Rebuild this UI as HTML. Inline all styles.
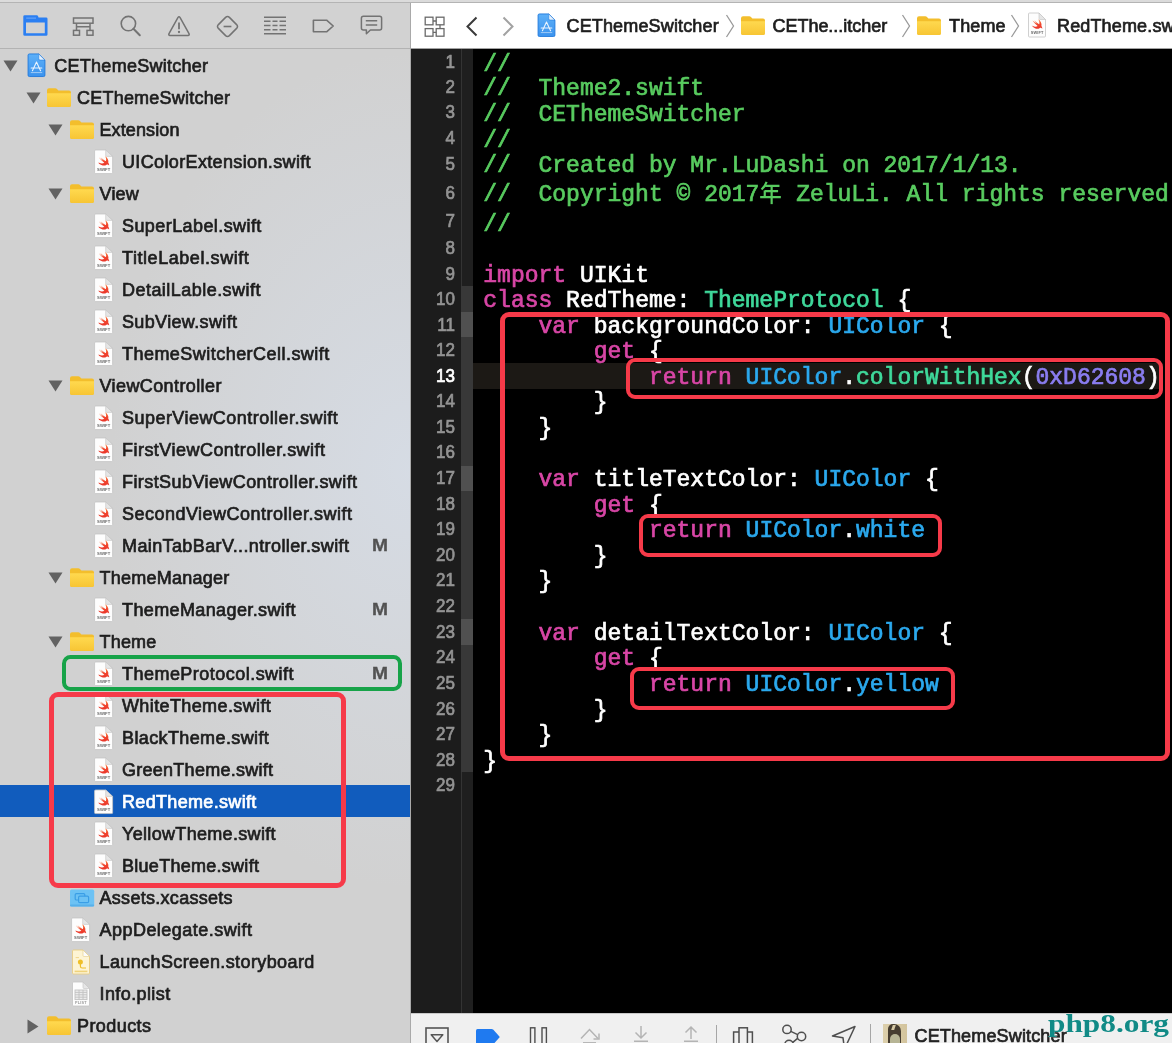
<!DOCTYPE html>
<html><head><meta charset="utf-8"><title>Xcode</title>
<style>
html,body{margin:0;padding:0}
body{width:1172px;height:1043px;overflow:hidden;position:relative;background:#d2d2d2;font-family:"Liberation Sans",sans-serif;color:#262626}
.abs{position:absolute}
/* top strip */
#topstrip{position:absolute;left:0;top:0;width:1172px;height:3px;background:#dbdbdb;border-bottom:1px solid #b4b4b4;box-sizing:border-box;z-index:9}
/* sidebar */
#side{will-change:transform;position:absolute;left:0;top:0;width:410px;height:1043px;background:radial-gradient(ellipse 300px 420px at 410px 470px,rgba(214,220,229,.95),rgba(214,220,229,0)),#d1d1d1;overflow:hidden}
#navbar{position:absolute;left:0;top:3px;width:410px;height:45px;border-bottom:1px solid #b3b3b3;background:#d2d2d2}
#navbar svg{position:absolute}
.row{position:absolute;left:0;width:410px;height:32px}
.row.sel{background:#115cbd}
.row.sel .lb{color:#fff;-webkit-text-stroke:.7px #fff}
.row svg{position:absolute}
.lb{position:absolute;top:.5px;height:32px;line-height:32px;font-size:18px;letter-spacing:.15px;white-space:nowrap;color:#1e1e1e;-webkit-text-stroke:.7px #1e1e1e}
.bm{position:absolute;left:372px;top:.6px;line-height:32px;font-size:17px;font-weight:bold;color:#525252;-webkit-text-stroke:.3px #525252;transform:scaleX(1.13);transform-origin:0 50%}
#sidesep{position:absolute;left:410px;top:3px;width:1px;height:1040px;background:#a9a9a9}
/* editor */
#jump{will-change:transform;position:absolute;left:411px;top:3px;width:761px;height:45px;background:#fff;border-bottom:1px solid #a3a3a3;overflow:hidden}
#jump svg{position:absolute}
#jump .jt{position:absolute;top:.5px;line-height:44px;font-size:18px;letter-spacing:.15px;color:#1e1e1e;-webkit-text-stroke:.7px #1e1e1e;white-space:nowrap}
#ed{will-change:transform;position:absolute;left:411px;top:49px;width:761px;height:964px;background:#000;overflow:hidden}
#gut{position:absolute;left:0;top:0;width:50px;height:966px;background:#1c1c1c}
#rib{position:absolute;left:50px;top:0;width:12px;height:966px;background:#1f1f1f;border-left:1px solid #343434;box-sizing:border-box}
.rb{position:absolute;left:50px;width:12px}
#curline{position:absolute;left:62px;top:314px;width:687px;height:26px;background:#1c1915}
.ln{position:absolute;left:0;width:44px;text-align:right;height:26px;line-height:26px;font-size:18.5px;color:#949494;-webkit-text-stroke:.7px #949494;transform:scaleX(.92);transform-origin:100% 50%}
.ln.cur{color:#fff;-webkit-text-stroke:.7px #fff}
pre.cd{position:absolute;left:72.3px;margin:0;height:26px;line-height:26px;font-family:"Liberation Mono",monospace;font-size:23px;font-weight:normal;-webkit-text-stroke:.7px;letter-spacing:0;color:#fff;white-space:pre;transform:scaleY(1.045);transform-origin:0 50%;margin-top:.3px}
.c{color:#58cb5f}.k{color:#d846a6}.t{color:#2ba9ee}.g{color:#3fd99b}.n{color:#8a7df0}
.cjk{display:inline-block;width:23px;height:1px;position:relative}
.cjk svg{position:absolute;left:0;bottom:-3.2px}
.box{position:absolute;border:5px solid #f63a49;border-radius:9px;box-sizing:border-box}
/* debug bar */
#dbg{will-change:transform;position:absolute;left:411px;top:1013px;width:761px;height:30px;background:#f0f0f0;border-top:1px solid #c8c8c8;box-sizing:border-box;overflow:hidden}
#dbg svg{position:absolute}
</style></head>
<body>
<svg width="0" height="0" style="position:absolute">
<defs>
<linearGradient id="gf" x1="0" y1="0" x2="0" y2="1"><stop offset="0" stop-color="#ffd94f"/><stop offset="1" stop-color="#f7c534"/></linearGradient>
<linearGradient id="gs" x1="0" y1="0" x2="0" y2="1"><stop offset="0" stop-color="#f9803a"/><stop offset=".55" stop-color="#f0452f"/><stop offset="1" stop-color="#ea3529"/></linearGradient>
<linearGradient id="gp" x1="0" y1="0" x2="0" y2="1"><stop offset="0" stop-color="#5db0f8"/><stop offset="1" stop-color="#3b93ee"/></linearGradient>
<symbol id="i-folder" viewBox="0 0 26 21">
<path d="M1 3.2Q1 1.2 3 1.2H9.2Q10.4 1.2 11.2 2.2L12.4 3.6H23Q25 3.6 25 5.6V18Q25 20 23 20H3Q1 20 1 18Z" fill="#f3be2c"/>
<path d="M1 6.2H25V18Q25 20 23 20H3Q1 20 1 18Z" fill="url(#gf)"/>
</symbol>
<symbol id="i-assets" viewBox="0 0 26 21">
<rect x="1" y="2.6" width="24.2" height="16.8" rx="1.6" fill="#6dc2f4"/>
<rect x="1" y="17.6" width="24.2" height="1.8" rx=".9" fill="#57b0ea"/>
<rect x="6.2" y="6.6" width="9.6" height="6.4" rx="1.2" fill="none" stroke="#3a9ee6" stroke-width="1.2"/>
<rect x="9.6" y="9.2" width="10" height="6.4" rx="1.2" fill="#6dc2f4" stroke="#3a9ee6" stroke-width="1.2"/>
</symbol>
<symbol id="i-page" viewBox="0 0 20 26">
<path d="M1.5 2Q1.5 1 2.5 1H12L18.5 7.5V24Q18.5 25 17.5 25H2.5Q1.5 25 1.5 24Z" fill="#fdfdfd" stroke="#c4c4c4" stroke-width=".8"/>
<path d="M12 1V6.5Q12 7.5 13 7.5H18.5Z" fill="#e6e6e6" stroke="#c4c4c4" stroke-width=".6"/>
</symbol>
<symbol id="i-swift" viewBox="0 0 20 26" preserveAspectRatio="none">
<use href="#i-page"/>
<path transform="translate(3.17,5.19) scale(.59)" fill="url(#gs)" d="M13.543 3.41c4.114 2.47 6.545 7.162 5.549 11.131-.024.093-.05.181-.076.272l.002.001c2.062 2.538 1.5 5.258 1.236 4.745-1.072-2.086-3.066-1.568-4.088-1.043a6.803 6.803 0 0 1-.281.158l-.02.012-.002.002c-2.115 1.123-4.957 1.205-7.812-.022a12.568 12.568 0 0 1-5.64-4.838c.649.48 1.35.902 2.097 1.252 3.019 1.414 6.051 1.311 8.197-.002C9.651 12.73 7.101 9.67 5.146 7.191a10.628 10.628 0 0 1-1.005-1.384c2.34 2.142 6.038 4.83 7.365 5.576C8.69 8.408 6.208 4.743 6.324 4.86c4.436 4.47 8.528 6.996 8.528 6.996.154.085.27.154.36.213.085-.215.16-.437.224-.668.708-2.588-.09-5.548-1.893-7.992z"/>
<text x="10.1" y="22.1" text-anchor="middle" font-family="Liberation Sans,sans-serif" font-weight="bold" font-size="3.9" fill="#6c6c6c" letter-spacing=".1">SWIFT</text>
</symbol>
<symbol id="i-story" viewBox="0 0 20 26">
<path d="M1.5 2Q1.5 1 2.5 1H12L18.5 7.5V24Q18.5 25 17.5 25H2.5Q1.5 25 1.5 24Z" fill="#fdf4d4" stroke="#e6cc84" stroke-width=".9"/>
<path d="M12 1V6.5Q12 7.5 13 7.5H18.5Z" fill="#fbfbfb" stroke="#e6cc84" stroke-width=".6"/>
<circle cx="9.4" cy="13" r="2.5" fill="#efbf27"/>
<path d="M9.4 15V17.2Q9.4 19 11.2 19H15" fill="none" stroke="#efbf27" stroke-width="1.2"/>
<path d="M4.6 8.6H8" stroke="#f1d68a" stroke-width="1"/>
<rect x="3.6" y="21.6" width="12.8" height="1.6" fill="#efd27a"/>
</symbol>
<symbol id="i-plist" viewBox="0 0 20 26">
<use href="#i-page"/>
<g stroke="#c2c2c2" stroke-width=".9" fill="none">
<rect x="4" y="9" width="12" height="9.6" fill="#ececec"/>
<path d="M4 11.4H16M4 13.8H16M4 16.2H16M8 9V18.6M12 9V18.6"/>
</g>
<text x="10" y="23" text-anchor="middle" font-family="Liberation Sans,sans-serif" font-weight="bold" font-size="3.8" fill="#9a9a9a" letter-spacing=".2">PLIST</text>
</symbol>
<symbol id="i-proj" viewBox="0 0 21 27">
<path d="M1.2 2.5Q1.2 1 2.7 1H13L19.8 7.8V24.5Q19.8 26 18.3 26H2.7Q1.2 26 1.2 24.5Z" fill="url(#gp)" stroke="#2079dc" stroke-width="1"/>
<path d="M13 1V6.3Q13 7.8 14.5 7.8H19.8Z" fill="#e3f0fd" stroke="#2079dc" stroke-width=".6"/>
<g stroke="#eaf4fe" stroke-width="1.2" fill="none" stroke-linecap="round">
<path d="M10.5 10L6 19.5M10.5 10L15 19.5M4.6 16.6H16.4"/>
<path d="M4.6 21.6H16.4" stroke-width=".8" opacity=".75"/>
</g>
</symbol>
</defs>
</svg>

<div id="topstrip"></div>
<div id="side">
<div id="navbar">
<!-- project navigator (selected, blue) -->
<svg style="left:23px;top:12px" width="25" height="22" viewBox="0 0 25 22"><path fill-rule="evenodd" d="M.3 1.6Q.3 .2 1.7 .2H13.6Q14.9 .2 15.2 1.5L15.5 2.4H23.1Q24.5 2.4 24.5 3.8V19.4Q24.5 20.8 23.1 20.8H1.7Q.3 20.8 .3 19.4ZM3 7.6V18.2H21.8V7.6Z" fill="#2b7ff2"/><path d="M3.2 3.1H13" stroke="#79b0f7" stroke-width=".9"/></svg>
<!-- hierarchy -->
<svg style="left:72px;top:13.5px" width="23" height="21" viewBox="0 0 23 21"><g fill="none" stroke="#737373" stroke-width="1.5"><rect x="1.5" y="1" width="19.5" height="5.2"/><rect x="1.5" y="13.4" width="6" height="4.8"/><rect x="15" y="13.4" width="6" height="4.8"/><path d="M4.5 6.2V13.4M18 6.2V13.4M4.5 9.8H18"/></g></svg>
<!-- search -->
<svg style="left:119px;top:11.5px" width="23" height="22" viewBox="0 0 23 22"><g fill="none" stroke="#737373" stroke-width="1.6"><circle cx="9.4" cy="8.6" r="7.2"/><path d="M14.4 13.8L20.8 20.2" stroke-linecap="round" stroke-width="2"/></g></svg>
<!-- warning -->
<svg style="left:167px;top:11.5px" width="24" height="22" viewBox="0 0 24 22"><path d="M10.9 2.6Q12 1 13.1 2.6L22 18.6Q22.8 20.4 21 20.4H3Q1.2 20.4 2 18.6Z" fill="none" stroke="#737373" stroke-width="1.5" stroke-linejoin="round"/><path d="M12 7.6V14.2" stroke="#737373" stroke-width="1.8"/><circle cx="12" cy="17" r="1.15" fill="#737373"/></svg>
<!-- test diamond -->
<svg style="left:215.5px;top:11.5px" width="23" height="23" viewBox="0 0 23 23"><path d="M9.6 2.4Q11.5 .6 13.4 2.4L20.6 9.6Q22.4 11.5 20.6 13.4L13.4 20.6Q11.5 22.4 9.6 20.6L2.4 13.4Q.6 11.5 2.4 9.6Z" fill="none" stroke="#737373" stroke-width="1.5"/><path d="M7.6 11.5H15.4" stroke="#737373" stroke-width="1.6"/></svg>
<!-- debug lines -->
<svg style="left:263px;top:13px" width="24" height="20" viewBox="0 0 24 20"><g stroke="#737373" stroke-width="1.4"><path d="M1 1.2H23M1 17.8H23"/><path d="M1 5.3H7.5M9.5 5.3H14.5M16.5 5.3H23M1 9.5H7.5M9.5 9.5H14.5M16.5 9.5H23M1 13.7H7.5M9.5 13.7H14.5M16.5 13.7H23"/></g></svg>
<!-- breakpoint -->
<svg style="left:311.5px;top:15.5px" width="23" height="14" viewBox="0 0 23 14"><path d="M1.4 1.2H14.6L21.2 7L14.6 12.8H1.4Z" fill="none" stroke="#737373" stroke-width="1.6" stroke-linejoin="round"/></svg>
<!-- report -->
<svg style="left:359.5px;top:11.5px" width="23" height="21" viewBox="0 0 23 21"><path d="M3.4 1.2H19.6Q21.6 1.2 21.6 3.2V13Q21.6 15 19.6 15H10.4L6.4 18.8V15H3.4Q1.4 15 1.4 13V3.2Q1.4 1.2 3.4 1.2Z" fill="none" stroke="#737373" stroke-width="1.5" stroke-linejoin="round"/><path d="M5.8 5.8H17.2M5.8 10H17.2" stroke="#737373" stroke-width="1.5"/></svg>
</div>
<div class="row" style="top:49px"><svg class="tri" style="left:3.4px;top:11px" width="15" height="12" viewBox="0 0 15 12"><path d="M0.5 0.5H14.5L7.5 11.5Z" fill="#626262"/></svg><svg class="ic" style="left:27px;top:4px" width="19" height="24.5"><use href="#i-proj"/></svg><span class="lb" style="left:54.3px;letter-spacing:0.264px">CEThemeSwitcher</span></div>
<div class="row" style="top:81px"><svg class="tri" style="left:25.6px;top:11px" width="15" height="12" viewBox="0 0 15 12"><path d="M0.5 0.5H14.5L7.5 11.5Z" fill="#626262"/></svg><svg class="ic" style="left:46px;top:6px" width="26" height="21"><use href="#i-folder"/></svg><span class="lb" style="left:77px;letter-spacing:0.217px">CEThemeSwitcher</span></div>
<div class="row" style="top:113px"><svg class="tri" style="left:47.8px;top:11px" width="15" height="12" viewBox="0 0 15 12"><path d="M0.5 0.5H14.5L7.5 11.5Z" fill="#626262"/></svg><svg class="ic" style="left:68.5px;top:6px" width="26" height="21"><use href="#i-folder"/></svg><span class="lb" style="left:99.5px;letter-spacing:0.115px">Extension</span></div>
<div class="row" style="top:145px"><svg class="ic" style="left:92.6px;top:4px" width="21.2" height="25.6"><use href="#i-swift"/></svg><span class="lb" style="left:122px;letter-spacing:0.36px">UIColorExtension.swift</span></div>
<div class="row" style="top:177px"><svg class="tri" style="left:47.8px;top:11px" width="15" height="12" viewBox="0 0 15 12"><path d="M0.5 0.5H14.5L7.5 11.5Z" fill="#626262"/></svg><svg class="ic" style="left:68.5px;top:6px" width="26" height="21"><use href="#i-folder"/></svg><span class="lb" style="left:99.5px;letter-spacing:0.199px">View</span></div>
<div class="row" style="top:209px"><svg class="ic" style="left:92.6px;top:4px" width="21.2" height="25.6"><use href="#i-swift"/></svg><span class="lb" style="left:122px;letter-spacing:0.42px">SuperLabel.swift</span></div>
<div class="row" style="top:241px"><svg class="ic" style="left:92.6px;top:4px" width="21.2" height="25.6"><use href="#i-swift"/></svg><span class="lb" style="left:122px;letter-spacing:0.563px">TitleLabel.swift</span></div>
<div class="row" style="top:273px"><svg class="ic" style="left:92.6px;top:4px" width="21.2" height="25.6"><use href="#i-swift"/></svg><span class="lb" style="left:122px;letter-spacing:0.461px">DetailLable.swift</span></div>
<div class="row" style="top:305px"><svg class="ic" style="left:92.6px;top:4px" width="21.2" height="25.6"><use href="#i-swift"/></svg><span class="lb" style="left:122px;letter-spacing:0.359px">SubView.swift</span></div>
<div class="row" style="top:337px"><svg class="ic" style="left:92.6px;top:4px" width="21.2" height="25.6"><use href="#i-swift"/></svg><span class="lb" style="left:122px;letter-spacing:0.463px">ThemeSwitcherCell.swift</span></div>
<div class="row" style="top:369px"><svg class="tri" style="left:47.8px;top:11px" width="15" height="12" viewBox="0 0 15 12"><path d="M0.5 0.5H14.5L7.5 11.5Z" fill="#626262"/></svg><svg class="ic" style="left:68.5px;top:6px" width="26" height="21"><use href="#i-folder"/></svg><span class="lb" style="left:99.5px;letter-spacing:0.399px">ViewController</span></div>
<div class="row" style="top:401px"><svg class="ic" style="left:92.6px;top:4px" width="21.2" height="25.6"><use href="#i-swift"/></svg><span class="lb" style="left:122px;letter-spacing:0.461px">SuperViewController.swift</span></div>
<div class="row" style="top:433px"><svg class="ic" style="left:92.6px;top:4px" width="21.2" height="25.6"><use href="#i-swift"/></svg><span class="lb" style="left:122px;letter-spacing:0.471px">FirstViewController.swift</span></div>
<div class="row" style="top:465px"><svg class="ic" style="left:92.6px;top:4px" width="21.2" height="25.6"><use href="#i-swift"/></svg><span class="lb" style="left:122px;letter-spacing:0.42px">FirstSubViewController.swift</span></div>
<div class="row" style="top:497px"><svg class="ic" style="left:92.6px;top:4px" width="21.2" height="25.6"><use href="#i-swift"/></svg><span class="lb" style="left:122px;letter-spacing:0.485px">SecondViewController.swift</span></div>
<div class="row" style="top:529px"><svg class="ic" style="left:92.6px;top:4px" width="21.2" height="25.6"><use href="#i-swift"/></svg><span class="lb" style="left:122px;letter-spacing:0.388px">MainTabBarV...ntroller.swift</span><span class="bm">M</span></div>
<div class="row" style="top:561px"><svg class="tri" style="left:47.8px;top:11px" width="15" height="12" viewBox="0 0 15 12"><path d="M0.5 0.5H14.5L7.5 11.5Z" fill="#626262"/></svg><svg class="ic" style="left:68.5px;top:6px" width="26" height="21"><use href="#i-folder"/></svg><span class="lb" style="left:99.5px;letter-spacing:0.243px">ThemeManager</span></div>
<div class="row" style="top:593px"><svg class="ic" style="left:92.6px;top:4px" width="21.2" height="25.6"><use href="#i-swift"/></svg><span class="lb" style="left:122px;letter-spacing:0.385px">ThemeManager.swift</span><span class="bm">M</span></div>
<div class="row" style="top:625px"><svg class="tri" style="left:47.8px;top:11px" width="15" height="12" viewBox="0 0 15 12"><path d="M0.5 0.5H14.5L7.5 11.5Z" fill="#626262"/></svg><svg class="ic" style="left:68.5px;top:6px" width="26" height="21"><use href="#i-folder"/></svg><span class="lb" style="left:99.5px;letter-spacing:0.194px">Theme</span></div>
<div class="row" style="top:657px"><svg class="ic" style="left:92.6px;top:4px" width="21.2" height="25.6"><use href="#i-swift"/></svg><span class="lb" style="left:122px;letter-spacing:0.47px">ThemeProtocol.swift</span><span class="bm">M</span></div>
<div class="row" style="top:689px"><svg class="ic" style="left:92.6px;top:4px" width="21.2" height="25.6"><use href="#i-swift"/></svg><span class="lb" style="left:122px;letter-spacing:0.385px">WhiteTheme.swift</span></div>
<div class="row" style="top:721px"><svg class="ic" style="left:92.6px;top:4px" width="21.2" height="25.6"><use href="#i-swift"/></svg><span class="lb" style="left:122px;letter-spacing:0.385px">BlackTheme.swift</span></div>
<div class="row" style="top:753px"><svg class="ic" style="left:92.6px;top:4px" width="21.2" height="25.6"><use href="#i-swift"/></svg><span class="lb" style="left:122px;letter-spacing:0.265px">GreenTheme.swift</span></div>
<div class="row sel" style="top:785px"><svg class="ic" style="left:92.6px;top:4px" width="21.2" height="25.6"><use href="#i-swift"/></svg><span class="lb" style="left:122px;letter-spacing:0.332px">RedTheme.swift</span></div>
<div class="row" style="top:817px"><svg class="ic" style="left:92.6px;top:4px" width="21.2" height="25.6"><use href="#i-swift"/></svg><span class="lb" style="left:122px;letter-spacing:0.323px">YellowTheme.swift</span></div>
<div class="row" style="top:849px"><svg class="ic" style="left:92.6px;top:4px" width="21.2" height="25.6"><use href="#i-swift"/></svg><span class="lb" style="left:122px;letter-spacing:0.276px">BlueTheme.swift</span></div>
<div class="row" style="top:881px"><svg class="ic" style="left:68.5px;top:6px" width="26" height="21"><use href="#i-assets"/></svg><span class="lb" style="left:99.5px;letter-spacing:0.29px">Assets.xcassets</span></div>
<div class="row" style="top:913px"><svg class="ic" style="left:70.1px;top:4px" width="21.2" height="25.6"><use href="#i-swift"/></svg><span class="lb" style="left:99.5px;letter-spacing:0.465px">AppDelegate.swift</span></div>
<div class="row" style="top:945px"><svg class="ic" style="left:71.0px;top:4px" width="20" height="26"><use href="#i-story"/></svg><span class="lb" style="left:99.5px;letter-spacing:0.394px">LaunchScreen.storyboard</span></div>
<div class="row" style="top:977px"><svg class="ic" style="left:71.0px;top:4px" width="20" height="26"><use href="#i-plist"/></svg><span class="lb" style="left:99.5px;letter-spacing:0.405px">Info.plist</span></div>
<div class="row" style="top:1009px"><svg class="tri" style="left:27.1px;top:9.5px" width="12" height="15" viewBox="0 0 12 15"><path d="M0.5 0.5V14.5L11.5 7.5Z" fill="#626262"/></svg><svg class="ic" style="left:46px;top:6px" width="26" height="21"><use href="#i-folder"/></svg><span class="lb" style="left:77px;letter-spacing:0.432px">Products</span></div>
<!-- annotation boxes in sidebar -->
<div class="box" style="left:62px;top:655px;width:339.6px;height:35.7px;border-color:#17a349;border-width:4.8px;border-radius:8.5px"></div>
<div class="box" style="left:49.4px;top:692px;width:296.8px;height:195.6px;border-radius:9px;border-width:5.2px"></div>
</div>
<div id="sidesep"></div>

<div id="jump">
<!-- related items grid -->
<svg style="left:12.5px;top:13px" width="22" height="22" viewBox="0 0 22 22"><g fill="none" stroke="#6a6a6a" stroke-width="1.3"><rect x="1.2" y="1.2" width="7.8" height="7.6"/><rect x="12.2" y="1.2" width="7.8" height="7.6"/><rect x="1.2" y="12.6" width="7.8" height="7.6"/><rect x="12.2" y="12.6" width="7.8" height="7.6"/><path d="M9 5H12.2M16 8.8V12.6M12.2 16.4H9"/></g></svg>
<svg style="left:54px;top:13px" width="14" height="21" viewBox="0 0 14 21"><path d="M11.5 1.5L2.5 10.5L11.5 19.5" fill="none" stroke="#3a3a3a" stroke-width="2"/></svg>
<svg style="left:90px;top:13px" width="14" height="21" viewBox="0 0 14 21"><path d="M2.5 1.5L11.5 10.5L2.5 19.5" fill="none" stroke="#a2a2a2" stroke-width="2"/></svg>
<svg style="left:126.3px;top:9.5px" width="19" height="24.5"><use href="#i-proj"/></svg>
<span class="jt" style="left:155.5px">CEThemeSwitcher</span>
<svg style="left:314px;top:11px" width="10" height="24" viewBox="0 0 10 24"><path d="M1.5 1L8.5 12L1.5 23" fill="none" stroke="#9a9a9a" stroke-width="1.3"/></svg>
<svg style="left:329px;top:12px" width="26" height="21"><use href="#i-folder"/></svg>
<span class="jt" style="left:361.5px;letter-spacing:-.03px">CEThe...itcher</span>
<svg style="left:490px;top:11px" width="10" height="24" viewBox="0 0 10 24"><path d="M1.5 1L8.5 12L1.5 23" fill="none" stroke="#9a9a9a" stroke-width="1.3"/></svg>
<svg style="left:505px;top:12px" width="26" height="21"><use href="#i-folder"/></svg>
<span class="jt" style="left:538px">Theme</span>
<svg style="left:599px;top:11px" width="10" height="24" viewBox="0 0 10 24"><path d="M1.5 1L8.5 12L1.5 23" fill="none" stroke="#9a9a9a" stroke-width="1.3"/></svg>
<svg style="left:616px;top:9px" width="20" height="26"><use href="#i-swift"/></svg>
<span class="jt" style="left:646px">RedTheme.swift</span>
</div>

<div id="ed">
<div id="gut"></div>
<div id="rib"></div>
<div class="rb" style="top:237px;height:486px;background:#383838"></div>
<div class="rb" style="top:263px;height:25px;background:#505050"></div>
<div class="rb" style="top:417px;height:25px;background:#505050"></div>
<div class="rb" style="top:570px;height:26px;background:#505050"></div>
<div id="curline"></div>
<div id="codewrap" style="position:absolute;left:0;top:-46.5px">
<div class="ln" style="top:46px">1</div>
<pre class="cd" style="top:49px"><span class="c">//</span></pre>
<div class="ln" style="top:71.5px">2</div>
<pre class="cd" style="top:73.7px"><span class="c">//  Theme2.swift</span></pre>
<div class="ln" style="top:96.8px">3</div>
<pre class="cd" style="top:99.3px"><span class="c">//  CEThemeSwitcher</span></pre>
<div class="ln" style="top:122.5px">4</div>
<pre class="cd" style="top:125.69999999999999px"><span class="c">//</span></pre>
<div class="ln" style="top:148.4px">5</div>
<pre class="cd" style="top:150.5px"><span class="c">//  Created by Mr.LuDashi on 2017/1/13.</span></pre>
<div class="ln" style="top:177px">6</div>
<pre class="cd" style="top:179.5px"><span class="c">//  Copyright © 2017<span class="cjk"><svg width="23" height="23" viewBox="0 0 100 100"><g fill="none" stroke="#58cb5f" stroke-width="9.5" stroke-linecap="butt"><path d="M33 6Q27 24 11 38"/><path d="M27 23H89"/><path d="M25 45H83"/><path d="M25 42V70"/><path d="M5 70H95"/><path d="M55 23V99"/></g></svg></span> ZeluLi. All rights reserved.</span></pre>
<div class="ln" style="top:205.5px">7</div>
<pre class="cd" style="top:209.3px"><span class="c">//</span></pre>
<div class="ln" style="top:232px">8</div>
<div class="ln" style="top:258px">9</div>
<pre class="cd" style="top:260px"><span class="k">import</span> UIKit</pre>
<div class="ln" style="top:283px">10</div>
<pre class="cd" style="top:285px"><span class="k">class</span> RedTheme: <span class="g">ThemeProtocol</span> {</pre>
<div class="ln" style="top:309px">11</div>
<pre class="cd" style="top:311px">    <span class="k">var</span> backgroundColor: <span class="t">UIColor</span> {</pre>
<div class="ln" style="top:334px">12</div>
<pre class="cd" style="top:336px">        <span class="k">get</span> {</pre>
<div class="ln cur" style="top:360px">13</div>
<pre class="cd" style="top:362px">            <span class="k">return</span> <span class="t">UIColor</span>.<span class="g">colorWithHex</span>(<span class="n">0xD62608</span>)</pre>
<div class="ln" style="top:385px">14</div>
<pre class="cd" style="top:387px">        }</pre>
<div class="ln" style="top:411px">15</div>
<pre class="cd" style="top:413px">    }</pre>
<div class="ln" style="top:436px">16</div>
<div class="ln" style="top:462px">17</div>
<pre class="cd" style="top:464px">    <span class="k">var</span> titleTextColor: <span class="t">UIColor</span> {</pre>
<div class="ln" style="top:488px">18</div>
<pre class="cd" style="top:490px">        <span class="k">get</span> {</pre>
<div class="ln" style="top:513px">19</div>
<pre class="cd" style="top:515px">            <span class="k">return</span> <span class="t">UIColor</span>.<span class="t">white</span></pre>
<div class="ln" style="top:539px">20</div>
<pre class="cd" style="top:541px">        }</pre>
<div class="ln" style="top:564px">21</div>
<pre class="cd" style="top:566px">    }</pre>
<div class="ln" style="top:590px">22</div>
<div class="ln" style="top:616px">23</div>
<pre class="cd" style="top:618px">    <span class="k">var</span> detailTextColor: <span class="t">UIColor</span> {</pre>
<div class="ln" style="top:641px">24</div>
<pre class="cd" style="top:643px">        <span class="k">get</span> {</pre>
<div class="ln" style="top:667px">25</div>
<pre class="cd" style="top:669px">            <span class="k">return</span> <span class="t">UIColor</span>.<span class="t">yellow</span></pre>
<div class="ln" style="top:693px">26</div>
<pre class="cd" style="top:695px">        }</pre>
<div class="ln" style="top:718px">27</div>
<pre class="cd" style="top:720px">    }</pre>
<div class="ln" style="top:744px">28</div>
<pre class="cd" style="top:746px">}</pre>
<div class="ln" style="top:769px">29</div>
</div>
<!-- annotation boxes in editor -->
<div class="box" style="left:89px;top:263px;width:670px;height:449px;border-radius:9px"></div>
<div class="box" style="left:215px;top:309px;width:537px;height:40.5px;border-width:4.5px"></div>
<div class="box" style="left:228px;top:465px;width:303px;height:43px;border-width:4.5px"></div>
<div class="box" style="left:219px;top:618px;width:325px;height:43px;border-width:4.5px"></div>
</div>

<div id="dbg">
<!-- hide debug area -->
<svg style="left:14px;top:13px" width="24" height="20" viewBox="0 0 24 20"><rect x="1" y="1" width="22" height="22" fill="none" stroke="#555" stroke-width="1.6"/><path d="M6.2 7.8H17.8L12 14.4Z" fill="none" stroke="#555" stroke-width="1.5" stroke-linejoin="round"/></svg>
<!-- breakpoints active -->
<svg style="left:65px;top:15px" width="24" height="16" viewBox="0 0 24 16"><path d="M1.5 0H15.5Q16.6 0 17.4 .8L23.4 7.4Q23.8 8 23.4 8.6L17.4 15.2Q16.6 16 15.5 16H1.5Q0 16 0 14.5V1.5Q0 0 1.5 0Z" fill="#1f7af0"/></svg>
<!-- pause -->
<svg style="left:118px;top:13px" width="20" height="20" viewBox="0 0 20 20"><g fill="none" stroke="#4f4f4f" stroke-width="1.4"><rect x="1.5" y=".8" width="4.4" height="22"/><rect x="13" y=".8" width="4.4" height="22"/></g></svg>
<!-- step over -->
<svg style="left:168px;top:14px" width="24" height="16" viewBox="0 0 24 16"><g fill="none" stroke="#b4b4b4" stroke-width="1.5"><path d="M2 10.5L10.5 1.5L19 10.5"/><path d="M14.5 11H20V5.5" /><path d="M4 14.8H17"/></g></svg>
<!-- step in -->
<svg style="left:221px;top:11px" width="18" height="20" viewBox="0 0 18 20"><g fill="none" stroke="#b4b4b4" stroke-width="1.5"><path d="M9 1V12M3.5 7.5L9 13L14.5 7.5M2 16.2H16"/></g></svg>
<!-- step out -->
<svg style="left:271px;top:11px" width="18" height="20" viewBox="0 0 18 20"><g fill="none" stroke="#b4b4b4" stroke-width="1.5"><path d="M9 14V2M3.5 7.5L9 2L14.5 7.5M2 16.2H16"/></g></svg>
<div style="position:absolute;left:305px;top:11px;width:1.3px;height:20px;background:#a6a6a6"></div>
<!-- view debugger -->
<svg style="left:320px;top:13px" width="24" height="20" viewBox="0 0 24 20"><g fill="none" stroke="#4f4f4f" stroke-width="1.5"><rect x="8" y=".8" width="8.4" height="22"/><path d="M8 5H2.6V22M16.4 5H21.4V22"/></g></svg>
<!-- memory graph -->
<svg style="left:370px;top:10px" width="28" height="22" viewBox="0 0 28 22"><g fill="none" stroke="#4f4f4f" stroke-width="1.5"><circle cx="6" cy="5.4" r="4.2"/><circle cx="20.5" cy="12.5" r="4.2"/><circle cx="8" cy="20.5" r="4.2"/><path d="M9.8 7.4L16.7 10.6M16.6 14.4L11.8 18.3"/></g></svg>
<!-- simulate location -->
<svg style="left:420px;top:11px" width="26" height="22" viewBox="0 0 26 22"><path d="M24 1.5L13.5 24L12 12.8L1.5 11Z" fill="none" stroke="#4f4f4f" stroke-width="1.5" stroke-linejoin="round"/></svg>
<div style="position:absolute;left:459px;top:10px;width:1.3px;height:20px;background:#a6a6a6"></div>
<!-- app icon -->
<div style="position:absolute;left:472px;top:10px;width:24px;height:25px;background:linear-gradient(90deg,#dccfab,#d3c49d);overflow:hidden">
<div style="position:absolute;left:5px;top:0;width:13px;height:30px;border-radius:5px 7px 0 0;background:#463d30"></div>
<div style="position:absolute;left:9px;top:1px;width:3px;height:5px;background:#d6c9a4;transform:skewX(-18deg)"></div>
<div style="position:absolute;left:7px;top:10px;width:10px;height:22px;border-radius:5px 5px 0 0;background:#b7b595"></div>
</div>
<span style="position:absolute;left:503.5px;top:6px;-webkit-text-stroke:.7px #1e1e1e;font-size:18px;letter-spacing:.15px;line-height:32px;color:#262626;white-space:nowrap">CEThemeSwitcher</span>
</div>
<div id="wm" style="position:absolute;left:1048px;top:1005.3px;font-family:'Liberation Serif',serif;font-weight:bold;font-size:26px;color:#118a86;line-height:38px;z-index:20;transform-origin:0 0;transform:scaleX(1.205);white-space:nowrap;text-shadow:0 0 1px #eaf4f3">php8.org</div>
</body></html>
